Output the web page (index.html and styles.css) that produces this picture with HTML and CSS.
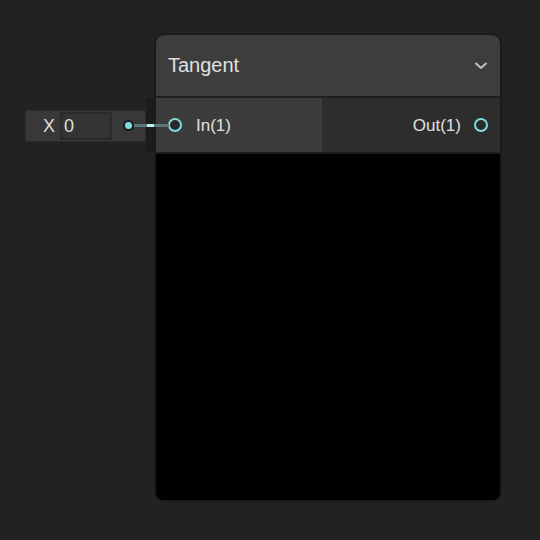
FILE: index.html
```html
<!DOCTYPE html>
<html>
<head>
<meta charset="utf-8">
<link rel="stylesheet" href="styles.css">
</head>
<body>
<div class="canvas">
  <div class="slot"></div>
  <div class="widget">
    <span class="wlabel">X</span>
    <span class="winput">0</span>
  </div>
  <div class="outdot"></div>
  <div class="wire"></div>
  <div class="wire-hi"></div>
  <div class="node">
    <div class="header">
      <span class="title">Tangent</span>
      <svg class="chev" width="12" height="8" viewBox="0 0 12 8"><polyline points="1,1.5 6,6 11,1.5" fill="none" stroke="#bdbdbd" stroke-width="2" stroke-linecap="round" stroke-linejoin="round"/></svg>
    </div>
    <div class="ports">
      <div class="pin">
        <span class="port"></span>
        <span class="plabel">In(1)</span>
      </div>
      <div class="pout">
        <span class="plabel">Out(1)</span>
        <span class="port"></span>
      </div>
    </div>
    <div class="body"></div>
  </div>
</div>
</body>
</html>
```
FILE: styles.css
```css
html, body {
  margin: 0;
  padding: 0;
  background: #222222;
  width: 540px;
  height: 540px;
  overflow: hidden;
  font-family: "Liberation Sans", Arial, sans-serif;
}
.canvas {
  position: relative;
  width: 540px;
  height: 540px;
}
.slot {
  position: absolute;
  left: 146px;
  top: 98px;
  width: 10px;
  height: 54px;
  background: #1c1c1c;
}
.widget {
  position: absolute;
  left: 25px;
  top: 110px;
  width: 121px;
  height: 32px;
  box-sizing: border-box;
  background: #383838;
  border: 1px solid #2c2c2c;
  border-radius: 2px;
  display: flex;
  align-items: center;
  padding-left: 17px;
  gap: 5px;
  color: #dedede;
  font-size: 18px;
}
.winput {
  width: 52px;
  height: 28px;
  box-sizing: border-box;
  background: #333333;
  border: 2px solid #2a2a2a;
  padding-left: 2px;
  line-height: 24px;
}
.outdot {
  position: absolute;
  left: 123px;
  top: 120px;
  width: 7px;
  height: 7px;
  border: 2px solid #1b1b1b;
  background: #7fdcdc;
  border-radius: 50%;
  z-index: 3;
}
.wire {
  position: absolute;
  left: 133px;
  top: 124px;
  width: 36px;
  height: 3px;
  background: #5c7777;
  z-index: 2;
}
.wire-hi {
  position: absolute;
  left: 147px;
  top: 124px;
  width: 7px;
  height: 3px;
  background: #b8f2f2;
  z-index: 4;
}
.node {
  position: absolute;
  left: 154px;
  top: 33px;
  width: 348px;
  height: 469px;
  box-sizing: border-box;
  border: 2px solid #1b1b1b;
  border-radius: 10px;
  background: #000;
  overflow: hidden;
  display: flex;
  flex-direction: column;
  z-index: 1;
}
.header {
  height: 61px;
  flex: none;
  background: #3d3d3d;
  border-bottom: 2px solid #1e1e1e;
  display: flex;
  align-items: center;
  padding: 0 13px 0 12px;
  color: #e0e0e0;
  font-size: 20px;
}
.chev {
  margin-left: auto;
}
.ports {
  height: 54px;
  flex: none;
  display: flex;
  border-bottom: 2px solid #1e1e1e;
  font-size: 17px;
  color: #e0e0e0;
}
.plabel {
  padding-top: 1px;
}
.pin {
  width: 166px;
  box-sizing: border-box;
  flex: none;
  background: #3c3c3c;
  display: flex;
  align-items: center;
  padding-left: 12px;
  gap: 14px;
}
.pout {
  flex: 1;
  background: #2d2d2d;
  display: flex;
  align-items: center;
  justify-content: flex-end;
  padding-right: 12px;
  gap: 13px;
}
.port {
  width: 14px;
  height: 14px;
  box-sizing: border-box;
  border: 2px solid #7fdcdc;
  background: #2a2a2a;
  border-radius: 50%;
}
.body {
  flex: 1;
  background: #000;
}
```
